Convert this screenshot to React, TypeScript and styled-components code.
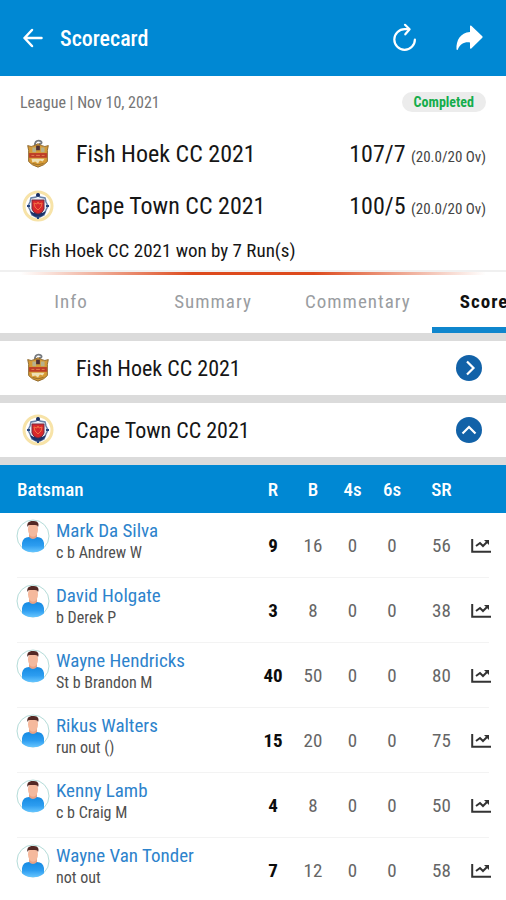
import React, { useState } from "react";
import styled, { createGlobalStyle, css } from "styled-components";

const GlobalStyle = createGlobalStyle`
  *, *::before, *::after { box-sizing: border-box; }
  html { scrollbar-width: none; }
  body {
    margin: 0;
    background: #fff;
    color: #161616;
    font-family: "Roboto Condensed", "Liberation Sans Narrow", Roboto, sans-serif;
    font-size: 20px;
    overflow-x: hidden;
  }
  button { font: inherit; color: inherit; background: none; border: 0; padding: 0; cursor: pointer; }
  h1, h2, p { margin: 0; font-weight: 400; }
  svg { display: block; }
`;

const Page = styled.div`
  width: 100%;
  overflow: hidden;
`;

const AppBar = styled.header`
  display: flex;
  align-items: center;
  height: 76px;
  padding: 0 22px;
  background: #0088d3;
  color: #fff;
`;

const IconButton = styled.button<{ $gap?: number }>`
  display: flex;
  margin-left: ${(p) => p.$gap ?? 0}px;
`;

const Title = styled.h1`
  flex: 1;
  margin-left: 16px;
  font-size: 22px;
  font-weight: 500;
`;

const MatchCard = styled.section`
  padding: 14px 20px 0;
  border-bottom: 2px solid #f0f0f0;
`;

const MetaRow = styled.div`
  display: flex;
  align-items: center;
  justify-content: space-between;
  height: 24px;
  margin-bottom: 14px;
  font-size: 16px;
  color: #757575;
`;

const Badge = styled.span`
  padding: 0 12px;
  border-radius: 10px;
  background: #ececec;
  color: #14ad4b;
  font-size: 14px;
  font-weight: 700;
  line-height: 20px;
`;

const TeamRow = styled.div`
  display: flex;
  align-items: center;
  height: 52px;
`;

const CrestSlot = styled.span`
  display: flex;
  justify-content: center;
  width: 36px;
  margin-right: 20px;
`;

const TeamName = styled.h2<{ $small?: boolean }>`
  flex: 1;
  text-align: left;
  font-size: ${(p) => (p.$small ? 22 : 24)}px;
`;

const Score = styled.p`
  font-size: 24px;
`;

const Overs = styled.small`
  color: #444;
  font-size: 15px;
`;

const Result = styled.p`
  padding: 0 9px;
  font-size: 19px;
  line-height: 38px;
`;

const Accent = styled.div`
  height: 3px;
  background: linear-gradient(90deg, #fff 4%, #dd4a1d 38%, #dd4a1d 62%, #fff 96%);
`;

const Tabs = styled.nav`
  display: flex;
  height: 58px;
  overflow: hidden;
`;

const Tab = styled.button<{ $active: boolean }>`
  flex: none;
  min-width: 142px;
  padding: 0 21px;
  border-bottom: 6px solid transparent;
  font-size: 19px;
  letter-spacing: 1px;
  color: #9a9da1;
  ${(p) =>
    p.$active &&
    css`
      padding: 0 27px;
      border-bottom-color: #0f86cd;
      color: #111;
      font-weight: 700;
    `}
`;

const InningsButton = styled.button`
  display: flex;
  align-items: center;
  width: 100%;
  height: 62px;
  padding: 0 24px 0 20px;
  border-top: 8px solid #dbdbdb;
`;

const BattingTable = styled.table`
  width: 100%;
  border-top: 8px solid #dbdbdb;
  border-collapse: separate;
  border-spacing: 0;
  table-layout: fixed;
`;

const HeadRow = styled.tr`
  height: 48px;
  background: #0088d3;
  color: #fff;
`;

const Col = styled.col<{ $w?: number }>`
  width: ${(p) => (p.$w ? `${p.$w}px` : "auto")};
`;

const HeadCell = styled.th<{ $left?: boolean }>`
  padding: ${(p) => (p.$left ? "0 0 0 17px" : "0")};
  text-align: ${(p) => (p.$left ? "left" : "center")};
  font-size: 19px;
  font-weight: 500;
`;

const PlayerRow = styled.tr`
  height: 65px;
  background: linear-gradient(#f3f3f3, #f3f3f3) center bottom / calc(100% - 34px) 1px no-repeat;
`;

const PlayerCell = styled.td`
  padding: 6px 0 0 16px;
  vertical-align: top;
`;

const Player = styled.div`
  display: grid;
  grid-template-columns: 34px 1fr;
  column-gap: 6px;
`;

const PlayerLink = styled.a`
  display: block;
  color: #2d83cc;
  font-size: 19px;
  line-height: 24px;
  text-decoration: none;
`;

const Dismissal = styled.span`
  display: block;
  color: #505050;
  font-size: 16px;
  line-height: 20px;
`;

const Stat = styled.td<{ $strong?: boolean }>`
  padding: 0;
  text-align: center;
  font-size: 19px;
  color: ${(p) => (p.$strong ? "#0c0c0c" : "#666")};
  font-weight: ${(p) => (p.$strong ? 700 : 400)};
`;

const BackIcon = () => (
  <svg width="22" height="22" viewBox="0 0 22 22" fill="none" stroke="#fff" strokeWidth="2.5" strokeLinecap="round" strokeLinejoin="round">
    <path d="M19.5 11H2.5M10 3 2.5 11 10 19" />
  </svg>
);

const RefreshIcon = () => (
  <svg width="26" height="30" viewBox="0 0 26 30" fill="none" stroke="#fff" strokeWidth="2.2" strokeLinecap="round" strokeLinejoin="round">
    <path d="M21.900 16.500A10.300 10.300 0 1 1 11.600 6.200h4" />
    <path d="M12 1.800 16.600 6.300l-4.300 5" />
  </svg>
);

const ShareIcon = () => (
  <svg width="28" height="26" viewBox="0 0 28 26" fill="#fff">
    <path d="M14 1.200c0-.8.7-1 1.300-.5l11 10.500c.5.5.5 1.100 0 1.600l-11 10.700c-.6.500-1.300.2-1.300-.5v-5.500C8.500 16.600 4.200 19 1.800 24.500c-.4.800-1.200.6-1.300-.3C.1 15.500 4.300 7.600 14 7z" />
  </svg>
);

const ShieldCrest = () => (
  <svg width="24" height="30" viewBox="0 0 24 32">
    <path d="M9 8C8 4 10 1 14 2c3 1 2 4-1 3" fill="none" stroke="#777b80" strokeWidth="2" />
    <path d="M1 7q4 2 7 0l4-2 4 2q3 2 7 0l-1 5v12q-3 4-10 6Q5 28 2 24V12z" fill="#d69a35" stroke="#8d682e" />
    <path d="M6 9h4v5H6zM15 9h4v5h-4z" fill="#b7b18b" />
    <path d="M10 7h4v5h-4z" fill="#4c3036" />
    <path d="M2.5 15h19v5h-19z" fill="#bd3c27" />
    <path d="M5 21h14l-2 3-3-1-2 3-3-2-3 1z" fill="#eee0b4" />
    <path d="M5 17.5h3m2 0h4m2 0h3" stroke="#e58352" />
    <path d="M6 26q6 3 12 0" fill="none" stroke="#966d2a" />
  </svg>
);

const RoundCrest = () => (
  <svg width="32" height="32" viewBox="0 0 32 32">
    <circle cx="16" cy="16" r="14" fill="#fff" stroke="#f7e3a8" strokeWidth="3" />
    <path d="m16 4 2 3 5 1 1 4 2 4-2 4-2 5-6 3-6-3-2-5-2-4 2-4 1-4 5-1z" fill="#e9eff6" stroke="#6a83a9" strokeWidth="1.500" />
    <circle cx="16" cy="5" r="2" fill="#172c61" />
    <path d="M8 21q2 6 8 6t8-6l-4 2h-8z" fill="#1b326a" />
    <path d="M10 10h12v9q-1 4-6 5-5-1-6-5z" fill="#d9282b" stroke="#76283e" />
    <path d="m12 13 3 1 1-2 1 2 3-1-1 4-3 3-3-3z" fill="none" stroke="#f17143" />
    <path d="M5 16h3m16 0h3M16 26v3" stroke="#24447e" strokeWidth="2" />
  </svg>
);

const RoundArrow = ({ open }: { open: boolean }) => (
  <svg width="26" height="26" viewBox="0 0 26 26" fill="none">
    <circle cx="13" cy="13" r="13" fill="#1262a8" />
    <path d={open ? "m6.5 16.500 6.500-6.500 6.500 6.500" : "m11 6.500 6.500 6.500-6.500 6.500"} stroke="#fff" strokeWidth="2.200" />
  </svg>
);

const Avatar = () => (
  <svg width="34" height="34" viewBox="0 0 34 34">
    <defs>
      <linearGradient id="shirt" x2="0" y2="1">
        <stop stopColor="#168ae2" />
        <stop offset=".55" stopColor="#2d9df0" />
        <stop offset="1" stopColor="#69c7ff" />
      </linearGradient>
      <clipPath id="disc"><circle cx="17" cy="17" r="16.500" /></clipPath>
    </defs>
    <circle cx="17" cy="17" r="16" fill="#fff" stroke="#b4dcd9" />
    <g clipPath="url(#disc)">
      <path d="M13 14h8v5q-4 5-8 0z" fill="#e9a184" />
      <path d="M6 31v-7q1-6 7-6 4 4 8 0 6 0 7 6v7q-11 5-22 0z" fill="url(#shirt)" />
      <ellipse cx="17" cy="10.500" rx="5" ry="7.300" fill="#f5b99d" />
      <path d="M11.500 8C10.500 4 13 1.800 17 2c5-.5 6.500 3 5 6-.5-2-2-2-5-2s-4.800-.5-5.500 2z" fill="#542925" />
    </g>
  </svg>
);

const ChartIcon = () => (
  <svg width="20" height="16" viewBox="0 0 20 16" fill="none" stroke="#333">
    <path d="M1.200 1v12.800H20" strokeWidth="2" />
    <path d="m5 8 4-3 3 3 4.500-4.500" strokeWidth="2" />
    <path d="M13 2H18v5z" fill="#333" stroke="none" />
  </svg>
);

const matchTeams = [
  { name: "Fish Hoek CC 2021", score: "107/7", crest: <ShieldCrest /> },
  { name: "Cape Town CC 2021", score: "100/5", crest: <RoundCrest /> },
];

const batsmen = [
  { name: "Mark Da Silva", out: "c b Andrew W", stats: [9, 16, 0, 0, 56] },
  { name: "David Holgate", out: "b Derek P", stats: [3, 8, 0, 0, 38] },
  { name: "Wayne Hendricks", out: "St b Brandon M", stats: [40, 50, 0, 0, 80] },
  { name: "Rikus Walters", out: "run out ()", stats: [15, 20, 0, 0, 75] },
  { name: "Kenny Lamb", out: "c b Craig M", stats: [4, 8, 0, 0, 50] },
  { name: "Wayne Van Tonder", out: "not out", stats: [7, 12, 0, 0, 58] },
];

const tabs = ["Info", "Summary", "Commentary", "Scorecard"];

export default function App() {
  const [tab, setTab] = useState("Scorecard");

  return (
    <Page>
      <GlobalStyle />
      <AppBar>
        <IconButton aria-label="Back"><BackIcon /></IconButton>
        <Title>Scorecard</Title>
        <IconButton aria-label="Refresh"><RefreshIcon /></IconButton>
        <IconButton aria-label="Share" $gap={37}><ShareIcon /></IconButton>
      </AppBar>

      <MatchCard>
        <MetaRow>
          <span>League | Nov 10, 2021</span>
          <Badge>Completed</Badge>
        </MetaRow>
        {matchTeams.map((team) => (
          <TeamRow key={team.name}>
            <CrestSlot>{team.crest}</CrestSlot>
            <TeamName>{team.name}</TeamName>
            <Score>{team.score} <Overs>(20.0/20 Ov)</Overs></Score>
          </TeamRow>
        ))}
        <Result>Fish Hoek CC 2021 won by 7 Run(s)</Result>
      </MatchCard>
      <Accent />

      <Tabs>
        {tabs.map((label) => (
          <Tab key={label} $active={tab === label} onClick={() => setTab(label)}>{label}</Tab>
        ))}
      </Tabs>

      {matchTeams.map((team, i) => (
        <InningsButton key={team.name} aria-expanded={i === 1}>
          <CrestSlot>{team.crest}</CrestSlot>
          <TeamName as="span" $small>{team.name}</TeamName>
          <RoundArrow open={i === 1} />
        </InningsButton>
      ))}

      <BattingTable>
        <colgroup>
          <Col />
          <Col $w={40} />
          <Col $w={40} />
          <Col $w={39} />
          <Col $w={40} />
          <Col $w={59} />
          <Col $w={35} />
        </colgroup>
        <thead>
          <HeadRow>
            <HeadCell $left>Batsman</HeadCell>
            <HeadCell>R</HeadCell>
            <HeadCell>B</HeadCell>
            <HeadCell>4s</HeadCell>
            <HeadCell>6s</HeadCell>
            <HeadCell>SR</HeadCell>
            <HeadCell aria-label="Chart" />
          </HeadRow>
        </thead>
        <tbody>
          {batsmen.map((b) => (
            <PlayerRow key={b.name}>
              <PlayerCell>
                <Player>
                  <Avatar />
                  <div>
                    <PlayerLink href="#">{b.name}</PlayerLink>
                    <Dismissal>{b.out}</Dismissal>
                  </div>
                </Player>
              </PlayerCell>
              {b.stats.map((value, i) => (
                <Stat key={i} $strong={i === 0}>{value}</Stat>
              ))}
              <Stat>
                <IconButton aria-label={`Chart for ${b.name}`}><ChartIcon /></IconButton>
              </Stat>
            </PlayerRow>
          ))}
        </tbody>
      </BattingTable>
    </Page>
  );
}
